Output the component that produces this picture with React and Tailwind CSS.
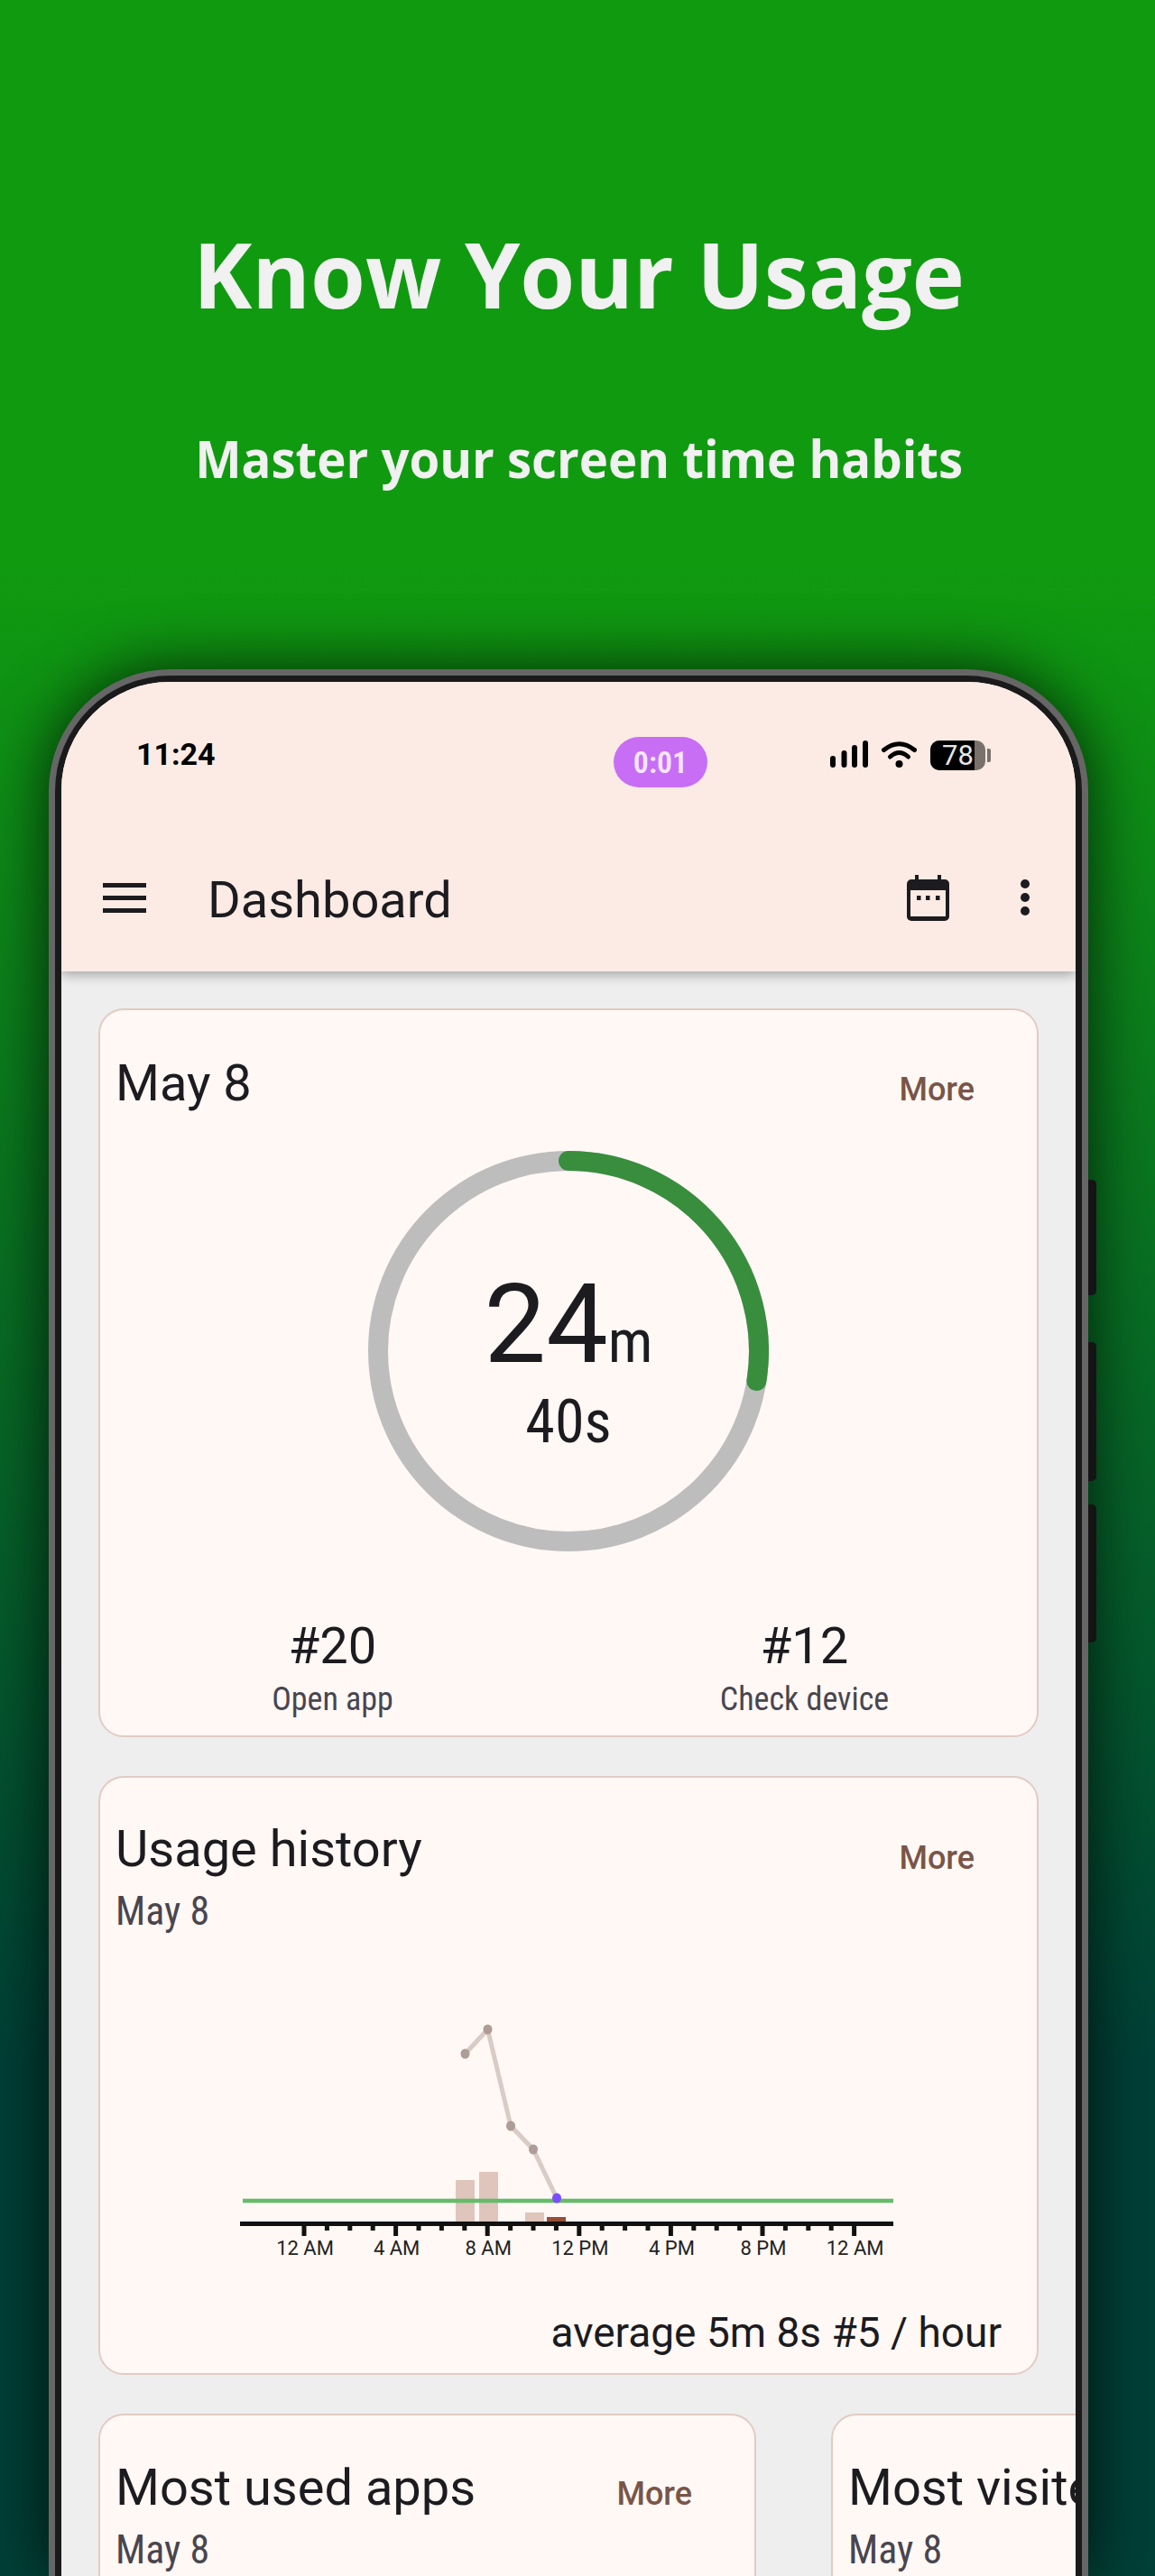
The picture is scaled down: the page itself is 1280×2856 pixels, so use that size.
import React from 'react';

const hours = Array.from({ length: 25 }, (_, i) => i);
const labels = ['12 AM', '4 AM', '8 AM', '12 PM', '4 PM', '8 PM', '12 AM'];
const hourX = (h) => 337 + h * 25.4;

const bars = [
  { x: 505, top: 2417, fill: '#dcbfb6', opacity: 0.9 },
  { x: 531, top: 2408, fill: '#dcbfb6', opacity: 0.9 },
  { x: 582, top: 2453, fill: '#dcbfb6', opacity: 0.9 },
  { x: 606, top: 2458, fill: '#954f38', opacity: 1 },
];

const points = [
  [515.5, 2277],
  [540.5, 2250],
  [566, 2357],
  [591, 2383],
  [617, 2437],
];

const MoreButton = () => (
  <span className="text-[36px] leading-[44px] font-medium text-[#795548]">More</span>
);

const CardTitle = ({ title, date }) => (
  <div className="min-w-0">
    <div className="text-[56px] leading-[66px] text-[#1c1b1f] whitespace-nowrap">{title}</div>
    {date && (
      <div className="mt-[10px] text-[44px] leading-[52px] text-[#49454f] [font-stretch:85%] whitespace-nowrap">
        {date}
      </div>
    )}
  </div>
);

const Stat = ({ value, label }) => (
  <div className="flex flex-col items-center">
    <div className="text-[56px] leading-[66px] text-[#1c1b1f]">{value}</div>
    <div className="mt-[4px] text-[36px] leading-[44px] text-[#49454f] [font-stretch:83%]">{label}</div>
  </div>
);

const Ring = () => (
  <div className="relative mx-auto h-[444px] w-[444px]">
    <svg width="444" height="444" viewBox="0 0 444 444" className="block">
      <circle cx="222" cy="222" r="211" fill="none" stroke="#bdbdbd" strokeWidth="22" />
      <path d="M222 11 A211 211 0 0 1 430.4 255" fill="none" stroke="#388e3c" strokeWidth="22" strokeLinecap="round" />
    </svg>
    <div className="absolute inset-0 flex flex-col items-center pt-[123px] text-[#1c1b1f]">
      <div className="flex items-baseline leading-none">
        <span className="text-[122px] leading-[140px]">24</span>
        <span className="text-[66px] leading-[70px] [font-stretch:82%]">m</span>
      </div>
      <div className="mt-[3px] text-[66px] leading-[70px] [font-stretch:85%]">40s</div>
    </div>
  </div>
);

const UsageChart = () => (
  <svg width="1037" height="280" viewBox="111 2240 1037 280" className="mt-[95px] block">
    {bars.map((b) => (
      <rect key={b.x} x={b.x} y={b.top} width="21" height={2463 - b.top} fill={b.fill} opacity={b.opacity} />
    ))}
    <rect x="269" y="2437" width="721" height="6" fill="#66bb6a" opacity="0.3" />
    <rect x="269" y="2438" width="721" height="4" fill="#66bb6a" />
    <polyline points={points.map((p) => p.join(',')).join(' ')} fill="none" stroke="#d9cbc6" strokeWidth="5" />
    {points.slice(0, 4).map((p) => (
      <ellipse key={p[0]} cx={p[0]} cy={p[1]} rx="5" ry="5.5" fill="#ae9c96" />
    ))}
    <ellipse cx="617" cy="2437" rx="5" ry="5.5" fill="#7c4dff" />
    <rect x="266" y="2463" width="724" height="5" fill="#111111" />
    {hours.map((h) => (
      <rect
        key={h}
        x={hourX(h) - 2.5}
        y="2465"
        width="5"
        height={h % 4 === 0 ? 14 : 8}
        fill="#111111"
      />
    ))}
    {labels.map((label, i) => (
      <text key={i} x={338 + i * 101.6} y="2500" textAnchor="middle" fontSize="22" fill="#222222">
        {label}
      </text>
    ))}
  </svg>
);

const CalendarIcon = () => (
  <svg width="47" height="51" viewBox="0 0 47 51" className="block">
    <rect x="0" y="5" width="47" height="46" rx="5" fill="#1c1b1f" />
    <rect x="9" y="0" width="4" height="7" fill="#1c1b1f" />
    <rect x="34" y="0" width="4" height="7" fill="#1c1b1f" />
    <rect x="4" y="17" width="39" height="29" fill="#fcebe4" />
    <rect x="11" y="23" width="4.5" height="5" fill="#1c1b1f" />
    <rect x="21" y="23" width="4.5" height="5" fill="#1c1b1f" />
    <rect x="32" y="23" width="4.5" height="5" fill="#1c1b1f" />
  </svg>
);

const SignalIcon = () => (
  <svg width="42" height="30" viewBox="0 0 42 30" className="block">
    <rect x="0" y="17" width="6" height="13" rx="3" fill="#000" />
    <rect x="12.5" y="11" width="6" height="19" rx="3" fill="#000" />
    <rect x="24" y="5" width="6" height="25" rx="3" fill="#000" />
    <rect x="36" y="0" width="6" height="30" rx="3" fill="#000" />
  </svg>
);

const WifiIcon = () => (
  <svg width="39" height="30" viewBox="0 0 39 30" className="ml-[15px] block">
    <path d="M2.5 10.5 Q19.5 -3 36.5 10.5" fill="none" stroke="#000" strokeWidth="5" strokeLinecap="round" />
    <path d="M9.5 18 Q19.5 9 29.5 18" fill="none" stroke="#000" strokeWidth="5" strokeLinecap="round" />
    <circle cx="19.5" cy="26" r="4" fill="#000" />
  </svg>
);

const Battery = () => (
  <div className="ml-[15px] flex items-center">
    <div className="relative h-[33px] w-[61px] overflow-hidden rounded-[10px] bg-[#7a706c]">
      <div className="absolute inset-y-0 left-0 w-[49px] bg-black" />
      <span className="absolute left-[13px] top-0 text-[31px] leading-[33px] text-[#e6e6e6]">78</span>
    </div>
    <div className="ml-[2px] h-[15px] w-[4px] rounded-r-[2px] bg-[#7a706c]" />
  </div>
);

const AppBar = () => (
  <header className="relative z-10 h-[321px] bg-[#fcebe4] pt-[61px] shadow-[0_4px_12px_rgba(0,0,0,0.3)]">
    <div className="flex h-[56px] items-start">
      <span className="ml-[83px] w-[529px] text-[34px] leading-[38px] font-bold text-black [font-stretch:94%]">11:24</span>
      <div className="flex h-[56px] w-[104px] items-center justify-center rounded-[28px] bg-[#c86ef5] text-[34px] font-semibold text-[#f5e6ff] [font-stretch:85%]">
        0:01
      </div>
      <div className="ml-[136px] mt-[4px] flex items-start">
        <SignalIcon />
        <WifiIcon />
        <Battery />
      </div>
    </div>
    <div className="mt-[77px] flex h-[90px] items-center">
      <div className="ml-[46px] flex w-[48px] flex-col gap-[9px]">
        <div className="h-[5px] bg-[#1c1b1f]" />
        <div className="h-[5px] bg-[#1c1b1f]" />
        <div className="h-[5px] bg-[#1c1b1f]" />
      </div>
      <h2 className="ml-[68px] mt-[5px] text-[56px] leading-[66px] text-[#1c1b1f]">Dashboard</h2>
      <div className="ml-auto mr-[51px] flex items-center gap-[79px]">
        <CalendarIcon />
        <div className="flex flex-col gap-[5px]">
          <div className="h-[10px] w-[10px] rounded-full bg-[#1c1b1f]" />
          <div className="h-[10px] w-[10px] rounded-full bg-[#1c1b1f]" />
          <div className="h-[10px] w-[10px] rounded-full bg-[#1c1b1f]" />
        </div>
      </div>
    </div>
  </header>
);

const cardClass = 'rounded-[28px] border-2 border-[#e2cbc3] bg-[#fff8f5]';

export default function App() {
  return (
    <div className="h-[2856px] w-[1280px] overflow-hidden bg-[linear-gradient(to_bottom,#109a10_0%,#109a10_22%,#004037_80%,#004037_100%)] font-['Roboto',sans-serif]">
      <div className="flex h-[742px] flex-col items-center pt-[243px] pl-[3px] font-['Open_Sans',sans-serif] font-bold text-[#f1f1f1]">
        <h1 className="scale-x-[0.975] text-[101px] leading-[120px] whitespace-nowrap">Know Your Usage</h1>
        <p className="mt-[110px] scale-x-[0.94] text-[58px] leading-[70px] whitespace-nowrap">Master your screen time habits</p>
      </div>

      <div className="relative ml-[54px] h-[2114px] w-[1152px] rounded-t-[135px] bg-[#666666] p-[7px] pb-0 shadow-[0_0_70px_rgba(0,0,0,0.75)]">
        <div className="absolute left-[1152px] top-[566px] h-[128px] w-[9px] rounded-r-[5px] bg-[#141414]" />
        <div className="absolute left-[1152px] top-[746px] h-[154px] w-[9px] rounded-r-[5px] bg-[#141414]" />
        <div className="absolute left-[1152px] top-[926px] h-[153px] w-[9px] rounded-r-[5px] bg-[#141414]" />
        <div className="h-full rounded-t-[128px] bg-[#1a1a1a] p-[7px] pb-0">
          <div className="h-full overflow-hidden rounded-t-[120px] bg-[#eeeeee]">
            <AppBar />
            <main className="flex flex-col gap-[43px] px-[41px] pt-[41px]">
              <section className={`${cardClass} h-[808px] w-[1042px]`}>
                <div className="flex items-start justify-between pl-[17px] pr-[69px] pt-[48px]">
                  <CardTitle title="May 8" />
                  <div className="pt-[18px]"><MoreButton /></div>
                </div>
                <div className="mt-[42px]"><Ring /></div>
                <div className="ml-[-4px] mt-[72px] grid grid-cols-[523px_523px]">
                  <Stat value="#20" label="Open app" />
                  <Stat value="#12" label="Check device" />
                </div>
              </section>

              <section className={`${cardClass} h-[664px] w-[1042px]`}>
                <div className="flex items-start justify-between pl-[17px] pr-[69px] pt-[46px]">
                  <CardTitle title="Usage history" date="May 8" />
                  <div className="pt-[21px]"><MoreButton /></div>
                </div>
                <UsageChart />
                <div className="mt-[39px] pr-[39px] text-right text-[46px] leading-[54px] text-[#1c1b1f]">
                  average 5m 8s #5 / hour
                </div>
              </section>

              <div className="flex gap-[83px]">
                <section className={`${cardClass} h-[400px] w-[729px] shrink-0`}>
                  <div className="flex items-start justify-between pl-[17px] pr-[69px] pt-[47px]">
                    <CardTitle title="Most used apps" date="May 8" />
                    <div className="pt-[18px]"><MoreButton /></div>
                  </div>
                </section>
                <section className={`${cardClass} h-[400px] w-[729px] shrink-0`}>
                  <div className="flex items-start justify-between pl-[17px] pr-[69px] pt-[47px]">
                    <CardTitle title="Most visited websites" date="May 8" />
                  </div>
                </section>
              </div>
            </main>
          </div>
        </div>
      </div>
    </div>
  );
}
